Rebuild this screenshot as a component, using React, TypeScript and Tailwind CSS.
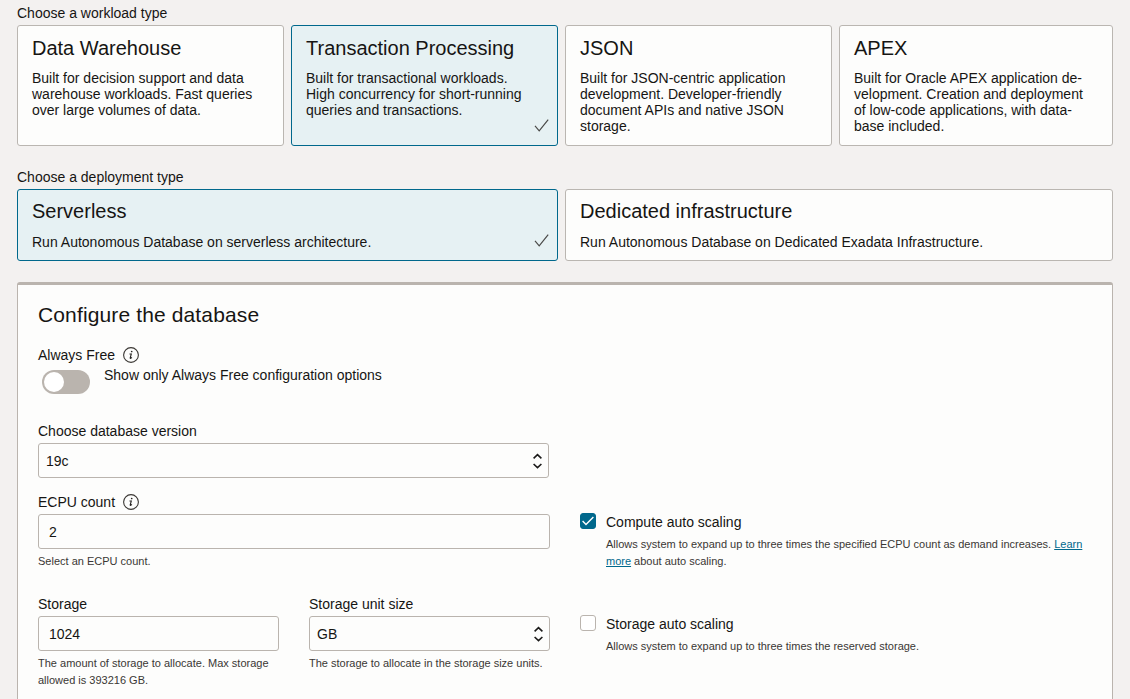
import React from "react";

type Option = { title: string; lines: string[]; selected?: boolean };

const workloads: Option[] = [
  {
    title: "Data Warehouse",
    lines: ["Built for decision support and data", "warehouse workloads. Fast queries", "over large volumes of data."],
  },
  {
    title: "Transaction Processing",
    lines: ["Built for transactional workloads.", "High concurrency for short-running", "queries and transactions."],
    selected: true,
  },
  {
    title: "JSON",
    lines: ["Built for JSON-centric application", "development. Developer-friendly", "document APIs and native JSON", "storage."],
  },
  {
    title: "APEX",
    lines: ["Built for Oracle APEX application de-", "velopment. Creation and deployment", "of low-code applications, with data-", "base included."],
  },
];

const deployments: Option[] = [
  { title: "Serverless", lines: ["Run Autonomous Database on serverless architecture."], selected: true },
  { title: "Dedicated infrastructure", lines: ["Run Autonomous Database on Dedicated Exadata Infrastructure."] },
];

function OptionCard({ option, compact }: { option: Option; compact?: boolean }) {
  return (
    <div
      className={`relative rounded-[3px] border pl-[14px] whitespace-nowrap ${compact ? "pt-[9px]" : "pt-[10px]"} ${
        option.selected ? "border-[#00688c] bg-[#e6f1f3]" : "border-[#bab6b1] bg-[#fdfdfc]"
      }`}
    >
      <h3 className="text-[20px] leading-6">{option.title}</h3>
      <div className={compact ? "mt-[11px]" : "mt-[10px]"}>
        {option.lines.map((line) => (
          <p key={line}>{line}</p>
        ))}
      </div>
      {option.selected && (
        <svg className="absolute right-[8px] bottom-[13px]" width="15" height="13" viewBox="0 0 15 13" fill="none" stroke="#4a4a48" strokeWidth="1.2">
          <path d="M1 6.9 5.2 11.8 14.2 0.7" />
        </svg>
      )}
    </div>
  );
}

function InfoIcon() {
  return (
    <svg width="16" height="16" viewBox="0 0 16 16" fill="none">
      <circle cx="8" cy="8" r="7.4" stroke="#3a3733" strokeWidth="1.1" />
      <circle cx="8.7" cy="4.5" r="0.85" fill="#252321" />
      <path d="M6.5 7H8.3L7.2 10.9Q7.1 11.5 7.7 11.3L9 10.6" stroke="#252321" strokeWidth="1.1" />
    </svg>
  );
}

function Chevrons() {
  return (
    <svg width="9" height="16" viewBox="0 0 9 16" fill="none" stroke="#1b1a19" strokeWidth="1.6">
      <path d="M0.6 5.3 4.5 1.7 8.4 5.3M0.6 11 4.5 14.6 8.4 11" />
    </svg>
  );
}

function Field({ value, select, className = "" }: { value: string; select?: boolean; className?: string }) {
  return (
    <div
      className={`flex h-[35px] items-center justify-between rounded-[3px] border border-[#bab4ae] pt-px ${
        select ? "pr-[6px] pl-[7px]" : "pl-[10px]"
      } ${className}`}
    >
      <span>{value}</span>
      {select && <Chevrons />}
    </div>
  );
}

function Checkbox({ checked }: { checked?: boolean }) {
  return (
    <span
      className={`-mt-px flex size-4 shrink-0 items-center justify-center rounded-[3px] border ${
        checked ? "border-[#00688c] bg-[#00688c]" : "border-[#bab4ae] bg-white"
      }`}
    >
      {checked && (
        <svg width="12" height="10" viewBox="0 0 12 10" className="shrink-0" fill="none" stroke="#fff" strokeWidth="1.4">
          <path d="M0.6 5.1 4 8.5 11.4 1" />
        </svg>
      )}
    </span>
  );
}

function Hint({ children, className = "mt-1" }: { children: React.ReactNode; className?: string }) {
  return <p className={`text-[11px] leading-[17px] text-[#3a3734] ${className}`}>{children}</p>;
}

export default function App() {
  return (
    <main className="flex h-[699px] w-[1130px] flex-col overflow-hidden bg-[#f3f1f0] px-[17px] pt-[5px] font-['Liberation_Sans',Arial,sans-serif] text-[14px] leading-4 whitespace-nowrap text-[#161513]">
      <div>Choose a workload type</div>
      <div className="mt-1 grid h-[121px] shrink-0 grid-cols-[267px_267px_267px_274px] gap-[7px]">
        {workloads.map((o) => (
          <OptionCard key={o.title} option={o} />
        ))}
      </div>
      <div className="mt-[23px]">Choose a deployment type</div>
      <div className="mt-1 grid h-[72px] shrink-0 grid-cols-[541px_548px] gap-[7px]">
        {deployments.map((o) => (
          <OptionCard key={o.title} option={o} compact />
        ))}
      </div>

      <section className="mt-[21px] h-[440px] shrink-0 rounded-t-[3px] border border-t-[3px] border-[#bab4ae] bg-[#fdfdfc] px-5 pt-[18px]">
        <h2 className="text-[21px] leading-6 tracking-[0.13px]">Configure the database</h2>
        <div className="mt-5 flex h-4 items-center gap-2">
          <span>Always Free</span>
          <InfoIcon />
        </div>
        <div className="mt-1 flex h-[27px] items-start">
          <div className="mt-[3px] ml-1 flex h-6 w-12 items-center rounded-full bg-[#bab4ae] pl-[2px]">
            <span className="size-5 rounded-full bg-white" />
          </div>
          <span className="ml-[14px]">Show only Always Free configuration options</span>
        </div>

        <div className="mt-[29px]">Choose database version</div>
        <Field value="19c" select className="mt-1 w-[511px]" />

        <div className="mt-4 grid grid-cols-[512px_1fr] gap-x-[30px]">
          <div>
            <div className="flex h-4 items-center gap-2">
              <span>ECPU count</span>
              <InfoIcon />
            </div>
            <Field value="2" className="mt-1" />
            <Hint>Select an ECPU count.</Hint>
          </div>
          <div className="mt-5 flex gap-[10px]">
            <Checkbox checked />
            <div>
              <div>Compute auto scaling</div>
              <Hint className="mt-[6px]">
                Allows system to expand up to three times the specified ECPU count as demand increases.{" "}
                <a className="text-[#00688c] underline underline-offset-1">Learn</a>
                <br />
                <a className="text-[#00688c] underline underline-offset-1">more</a> about auto scaling.
              </Hint>
            </div>
          </div>
        </div>

        <div className="mt-[26px] grid grid-cols-[241px_241px_1fr] gap-x-[30px]">
          <div>
            <div>Storage</div>
            <Field value="1024" className="mt-1" />
            <Hint>
              The amount of storage to allocate. Max storage
              <br />
              allowed is 393216 GB.
            </Hint>
          </div>
          <div>
            <div>Storage unit size</div>
            <Field value="GB" select className="mt-1" />
            <Hint>The storage to allocate in the storage size units.</Hint>
          </div>
          <div className="mt-5 flex gap-[10px]">
            <Checkbox />
            <div>
              <div>Storage auto scaling</div>
              <Hint className="mt-[6px]">Allows system to expand up to three times the reserved storage.</Hint>
            </div>
          </div>
        </div>
      </section>
    </main>
  );
}
